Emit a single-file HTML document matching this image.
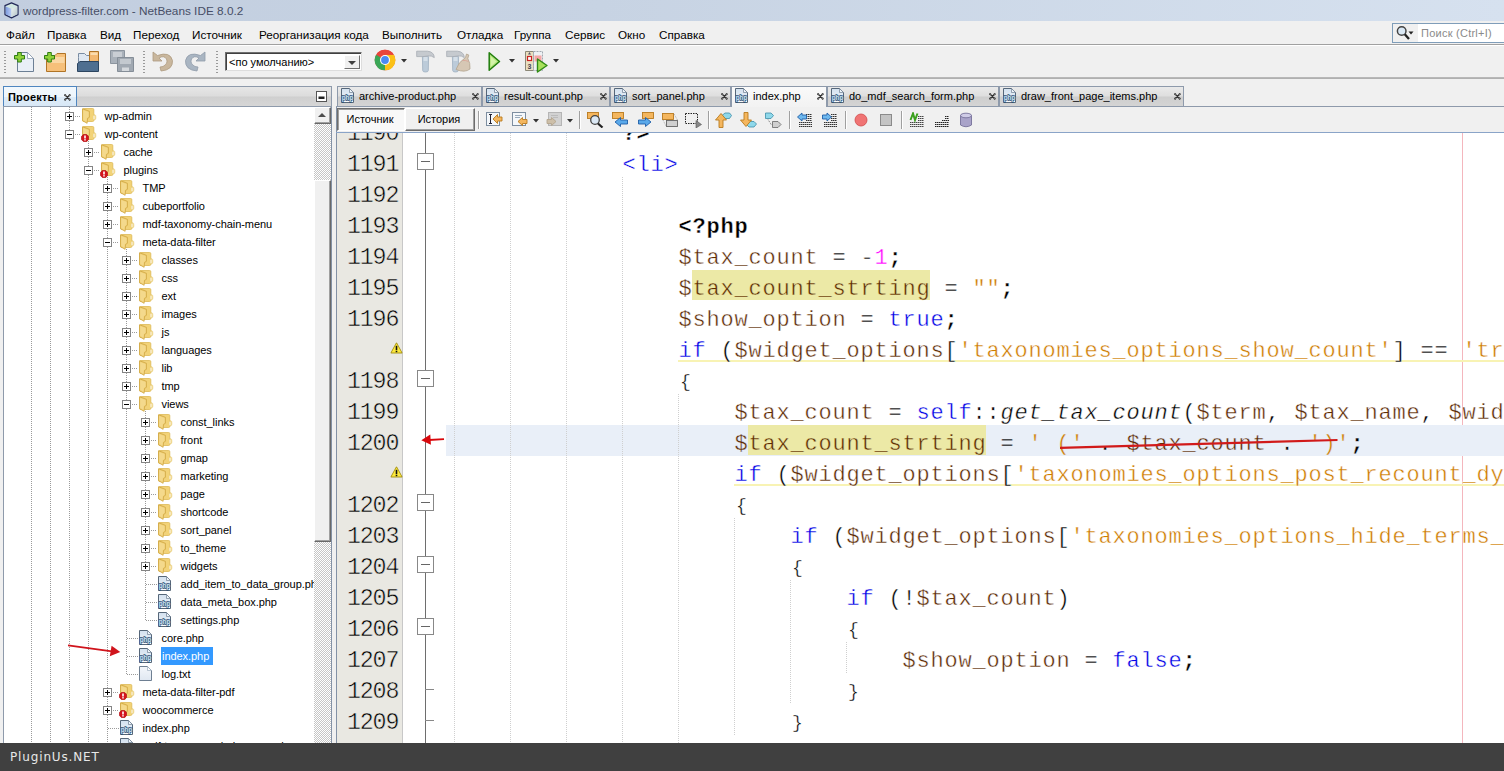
<!DOCTYPE html>
<html><head><meta charset="utf-8"><title>wordpress-filter.com - NetBeans IDE 8.0.2</title>
<style>
*{box-sizing:border-box;margin:0;padding:0}
html,body{width:1504px;height:771px;overflow:hidden}
body{position:relative;background:#f0f0f0;font-family:"Liberation Sans","DejaVu Sans",sans-serif;font-size:11px;color:#000}
i{display:block;position:absolute;font-style:normal}
.abs{position:absolute}
/* title */
.title{position:absolute;left:0;top:0;width:1504px;height:21px;background:linear-gradient(90deg,#c2cedf 0%,#c7d3e3 40%,#d6e1ef 100%)}
.title span{position:absolute;left:23px;top:4px;font-size:11.8px;line-height:15px;color:#474e66;white-space:nowrap}
/* menubar */
.menubar{position:absolute;left:0;top:21px;width:1504px;height:24px;background:#f0f0f0;border-bottom:1px solid #a0a0a0}
.menubar span{position:absolute;top:5.5px;font-size:11.7px;line-height:15px;white-space:nowrap;color:#000}
.search{position:absolute;left:1392px;top:23px;width:113px;height:20px;background:linear-gradient(90deg,#f0f0f0 0 25px,#fff 25px);border:1px solid #7f9db9}
.search span{position:absolute;left:28px;top:2px;font-size:11px;line-height:14px;color:#8a8a8a;white-space:nowrap;letter-spacing:0.25px}
/* toolbar */
.toolbar{position:absolute;left:0;top:45px;width:1504px;height:33px;background:#f0f0f0;border-top:1px solid #fff;border-bottom:1px solid #b8b8b8;box-shadow:0 1px 0 #b0b0b0}
.toolbar svg{position:absolute}
.grip{position:absolute;top:5px;width:2px;height:22px;background:repeating-linear-gradient(180deg,#9a9a9a 0 1px,transparent 1px 3px)}
.combo{position:absolute;left:225px;top:6px;width:137px;height:19px;background:#fff;border:1px solid #6f6f6f;border-right-color:#ddd;border-bottom-color:#ddd;box-shadow:inset 1px 1px 0 #404040}
.combo span{position:absolute;left:3px;top:2px;font-size:11px;line-height:14px;white-space:nowrap}
.combo b{position:absolute;right:1px;top:2px;width:16px;height:14px;background:#f0f0f0;border:1px solid #fff;border-right-color:#707070;border-bottom-color:#707070}
.combo b:after{content:"";position:absolute;left:3px;top:5px;border:4px solid transparent;border-top:4px solid #404040;border-bottom:0}
/* left panel */
.lhead{position:absolute;left:3px;top:86px;width:329px;height:21px;border:1px solid #8e9aab;background:linear-gradient(180deg,#e6e6e6 0%,#dcdcdc 48%,#cfcfcf 52%,#d6d6d6 100%)}
.ltab{position:absolute;left:-1px;top:-1px;width:74px;height:20px;background:linear-gradient(180deg,#f2f8fd 0%,#eef6fc 50%,#deecf8 55%,#d8e8f6 100%);border-right:1px solid #4f86c0;border-top:1px solid #4f86c0;border-left:1px solid #4f86c0}
.ltab span{position:absolute;left:4px;top:3px;font-weight:bold;font-size:11px;line-height:14px;letter-spacing:0.2px}
.tree{position:absolute;left:3px;top:107px;width:311px;height:636px;background:#fff;border-left:1px solid #8e9aab;overflow:hidden}
.tree .tin{position:absolute;left:-4px;top:0;width:330px;height:640px}
.tree .row{position:absolute;left:0;width:330px;height:18px}
.tree .row .t{position:absolute;top:2px;font-size:11px;line-height:14px;white-space:nowrap;padding:0 1px;letter-spacing:-0.05px;margin-left:-0.5px}
.tree .row .t.sel{background:#3399ff;color:#fff;top:0;line-height:18px;height:18px;margin-left:0;padding:0 1px;width:52px}
.tree .ex{position:absolute;top:5px}
.tree .ic{position:absolute;top:1px}
.tree .vl{width:1px;background:repeating-linear-gradient(180deg,#9a9a9a 0 1px,transparent 1px 2px)}
.tree .hl{top:9px;height:1px;background:repeating-linear-gradient(90deg,#9a9a9a 0 1px,transparent 1px 2px)}
.vscroll{position:absolute;left:314px;top:107px;width:18px;height:636px;border-right:1px solid #8391a5;background-color:#fff;background-image:repeating-conic-gradient(#fff 0 25%,#c6c6c6 0 50%);background-size:2px 2px}
.vscroll .up{position:absolute;left:0;top:0;width:17px;height:17px;background:#f0f0f0;border:1px solid #fff;border-right-color:#696969;border-bottom-color:#696969;box-shadow:inset -1px -1px 0 #a0a0a0}
.vscroll .up:after{content:"";position:absolute;left:3px;top:5px;border:4px solid transparent;border-bottom:4px solid #4c4c4c;border-top:0}
.vscroll .thumb{position:absolute;left:0;top:73px;width:17px;height:362px;background:#f0f0f0;border:1px solid #fff;border-right-color:#696969;border-bottom-color:#696969;box-shadow:inset -1px -1px 0 #a0a0a0}
.split{position:absolute;left:332px;top:86px;width:4px;height:657px;background:#f0f0f0}
/* editor */
.etabs{position:absolute;left:336px;top:86px;width:1168px;height:21px;border-bottom:1px solid #8e9aab;background:#f0f0f0}
.etab{position:absolute;top:0;height:20px;background:linear-gradient(180deg,#eaeaea 0%,#dedede 48%,#cecece 52%,#d4d4d4 100%);border:1px solid #8e9aab;border-bottom:0}
.etab.act{background:linear-gradient(180deg,#fafafa,#f2f2f2);height:21px}
.etab span{position:absolute;left:21px;top:2px;font-size:11px;line-height:14px;white-space:nowrap}
.etab svg{position:absolute}
.ebar{position:absolute;left:336px;top:107px;width:1168px;height:26px;background:#f0f0f0;border-bottom:1px solid #8aa4c8;box-shadow:inset 1px 0 0 #8391a5}
.ebar svg{position:absolute}
.ebtn{position:absolute;top:1px;height:23px;font-size:11px;line-height:21px;text-align:center;padding-right:2px;border:1px solid #fff;border-right-color:#6d6d6d;border-bottom-color:#6d6d6d;box-shadow:inset -1px -1px 0 #a0a0a0;background:#f0f0f0}
.ebtn.on{background:#f8f8f8;border-color:#6d6d6d #fff #fff #6d6d6d;box-shadow:inset 1px 1px 0 #a0a0a0}
.esep{position:absolute;top:4px;width:2px;height:18px;border-left:1px solid #a0a0a0;border-right:1px solid #fff}
.code{position:absolute;left:336px;top:133px;width:1168px;height:610px;background:#fff;overflow:hidden;font-family:"Liberation Mono","DejaVu Sans Mono",monospace;font-size:23.333px;color:#000}
.code .gutter{position:absolute;left:0;top:0;width:67px;height:610px;background:#e9e8e2;border-left:1px solid #8391a5;border-right:1px solid #c8c8c8}
.code .foldline{position:absolute;left:89px;top:0;width:1px;height:610px;background:#6e6e6e}
.code .margin{position:absolute;left:1126px;top:0;width:1px;height:610px;background:#f4b6bd}
.code .ig{z-index:2;width:1px;background:repeating-linear-gradient(180deg,#cfcfcf 0 1px,transparent 1px 2px)}
.ln{position:absolute;left:0;width:1168px;height:31px;line-height:31px;white-space:nowrap}
.ln.cur:before{content:"";position:absolute;left:110px;top:0;width:1060px;height:31px;background:#e9eff8}
.ln .num{position:absolute;left:11px;top:4px;letter-spacing:-1.2px;-webkit-text-stroke:0.5px #e9e8e2}
.ln .c{position:absolute;top:4.4px;font-size:22px;letter-spacing:0.8px;-webkit-text-stroke:0.4px #fff}
.ln.cur .c{-webkit-text-stroke-color:#e9eff8}
.ln .c .hi{-webkit-text-stroke-color:#ece9a6}
.ln .hib{top:0;height:30px;background:#ece9a6}
.ln .wav{top:28px;height:2px;width:900px;background:#f8f3b4}
.ln .warn{position:absolute;left:54px;top:10px}
.ln .fold{position:absolute;left:81px;top:7px}
.ln .fend{left:89px;top:16px;width:9px;height:1px;background:#888}
.br{font-size:18px;position:relative;top:-1px;left:1.500px;letter-spacing:0;-webkit-text-stroke-width:0.3px}
.b{font-weight:bold;color:#000;-webkit-text-stroke-width:0.35px}
.tag{color:#0000e6}
.v{color:#5c2a04}
.n{color:#ff00ff}
.s{color:#ce7b00}
.k{color:#0000e6}
.i{font-style:italic}
.bottom{position:absolute;left:0;top:743px;width:1504px;height:28px;background:#404040}
.bottom span{position:absolute;left:10px;top:7px;font-family:"DejaVu Sans","Liberation Sans",sans-serif;font-size:12px;line-height:15px;color:#e8e8e8;letter-spacing:0.85px}

</style></head>
<body>
<svg width="0" height="0" style="position:absolute">
<defs>
<linearGradient id="gFold" x1="0" y1="0" x2="1" y2="0"><stop offset="0" stop-color="#e9c35c"/><stop offset="0.5" stop-color="#f1d27c"/><stop offset="1" stop-color="#f3d373"/></linearGradient>
<linearGradient id="gPhp" x1="0" y1="0" x2="0" y2="1"><stop offset="0" stop-color="#d3e1ef"/><stop offset="0.5" stop-color="#e2ebf4"/><stop offset="0.9" stop-color="#f4f8fc"/><stop offset="1" stop-color="#ffffff"/></linearGradient>
<linearGradient id="gTxt" x1="0" y1="0" x2="0" y2="1"><stop offset="0" stop-color="#f4f7fb"/><stop offset="1" stop-color="#dfe7f1"/></linearGradient>
<g id="exp"><rect x="0.5" y="0.5" width="8" height="8" fill="#fff" stroke="#848484"/><path d="M2 4.5h5M4.5 2v5" stroke="#000" stroke-width="1"/></g>
<g id="exm"><rect x="0.5" y="0.5" width="8" height="8" fill="#fff" stroke="#848484"/><path d="M2 4.5h5" stroke="#000" stroke-width="1"/></g>
<g id="i-folder">
 <rect x="0.6" y="0.5" width="11.2" height="13" rx="1.2" fill="url(#gFold)" stroke="#ddb955" stroke-width="0.8"/>
 <path d="M11.8 6.300 L13.700 7.400 Q14.100 9.300 13.700 11.200 L11.800 12.300 Z" fill="#f6dd94" stroke="#e3c46a" stroke-width="0.500"/>
 <path d="M11.500 7.600 L12.400 8 V11 L11.500 11.600 Z" fill="#fff"/>
 <path d="M0.500 0.800 L7.400 3.300 V9.300 L5.500 10.500 L5.100 15.300 L0.400 12.600 Z" fill="#f0d078" stroke="#cfa641" stroke-width="0.800" stroke-linejoin="round"/>
 <path d="M1.300 2.200 L6.600 4.100 V8.800 L4.800 10 L4.500 13.800 L1.300 12 Z" fill="#f7e09a" opacity="0.600"/>
</g>
<g id="i-php">
 <path d="M0.500 0.500 H8.500 L12.500 4.500 V14.500 H0.500 Z" fill="url(#gPhp)" stroke="#566779"/>
 <path d="M8.500 0.500 V4.500 H12.500 Z" fill="#eef4fa" stroke="#6f8092" stroke-width="0.700"/>
 <text x="6.500" y="12" font-family="Liberation Sans,sans-serif" font-size="7.800" font-weight="bold" text-anchor="middle" fill="#d8ebfc" stroke="#27496f" stroke-width="1.300" paint-order="stroke" textLength="11.500" lengthAdjust="spacingAndGlyphs">php</text>
</g>
<g id="i-txt">
 <path d="M0.5 0.5 H8.5 L12.5 4.5 V14.5 H0.5 Z" fill="url(#gTxt)" stroke="#6e7f92"/>
 <path d="M8.5 0.5 V4.5 H12.5 Z" fill="#fff" stroke="#8fa2b6" stroke-width="0.6"/>
</g>
<g id="i-err"><path d="M2.600 0.300 H5.400 L7.700 2.600 V5.400 L5.400 7.700 H2.600 L0.300 5.400 V2.600 Z" fill="#d4141c" stroke="#a80e14" stroke-width="0.600"/><rect x="3.200" y="1.500" width="1.600" height="3" fill="#fff"/><rect x="3.200" y="5.200" width="1.600" height="1.300" fill="#fff"/></g>
<g id="i-warn"><path d="M6.500 1.400 L11.700 10.800 H1.300 Z" fill="#fde93c" stroke="#a8941a" stroke-width="1.500" stroke-linejoin="round"/><path d="M6.500 1.600 L11.400 10.600 H1.600 Z" fill="#fde93c"/><rect x="5.700" y="3.800" width="1.600" height="4.200" fill="#111"/><rect x="5.700" y="8.700" width="1.600" height="1.500" fill="#111"/></g>
<g id="i-fold"><rect x="0.5" y="0.5" width="16" height="16" fill="#fff" stroke="#888"/><path d="M4 8.5h9" stroke="#666" stroke-width="1"/></g>
<g id="i-x" transform="scale(0.85)"><path d="M1.2 1.2 L6.800 6.800 M6.800 1.200 L1.200 6.800" stroke="#333" stroke-width="1.500" fill="none" stroke-linecap="round"/><circle cx="1.400" cy="1.400" r="1.200" fill="#333"/><circle cx="6.600" cy="1.400" r="1.200" fill="#333"/><circle cx="1.400" cy="6.600" r="1.200" fill="#333"/><circle cx="6.600" cy="6.600" r="1.200" fill="#333"/><circle cx="1.400" cy="1.400" r="0.450" fill="#eee"/><circle cx="6.600" cy="1.400" r="0.450" fill="#eee"/><circle cx="1.400" cy="6.600" r="0.450" fill="#eee"/><circle cx="6.600" cy="6.600" r="0.450" fill="#eee"/></g>
<g id="i-dd"><path d="M0 0 H6 L3 3.5 Z" fill="#333"/></g>
</defs>
</svg>
<div class="title">
<svg class="abs" style="left:4px;top:2px" width="15" height="17" viewBox="0 0 15 17"><defs><linearGradient id="cbL" x1="0" y1="0" x2="1" y2="0"><stop offset="0" stop-color="#7d9be0"/><stop offset="1" stop-color="#bccdf4"/></linearGradient><linearGradient id="cbR" x1="0" y1="0" x2="1" y2="1"><stop offset="0" stop-color="#eef3f3"/><stop offset="1" stop-color="#b4c4c8"/></linearGradient></defs><path d="M7.500 0.800 L14 3.600 V12.600 L7.500 15.800 L1 12.600 V3.600 Z" fill="#d3e8e2" stroke="#252b5a" stroke-width="1.300" stroke-linejoin="round"/><path d="M1.700 4.400 L7.500 6.800 V15 L1.700 12.200 Z" fill="url(#cbL)"/><path d="M7.500 6.800 L13.300 4.400 V12.200 L7.500 15 Z" fill="url(#cbR)"/></svg>
<span>wordpress-filter.com - NetBeans IDE 8.0.2</span>
</div>
<div class="menubar">
<span style="left:6px">Файл</span><span style="left:47px">Правка</span><span style="left:100px">Вид</span><span style="left:133px">Переход</span><span style="left:192px">Источник</span><span style="left:259px">Реорганизация кода</span><span style="left:382px">Выполнить</span><span style="left:457px">Отладка</span><span style="left:514px">Группа</span><span style="left:565px">Сервис</span><span style="left:618px">Окно</span><span style="left:659px">Справка</span>
</div>
<div class="search">
<svg class="abs" style="left:3px;top:1px" width="20" height="16" viewBox="0 0 20 16"><circle cx="5.700" cy="6" r="4.300" fill="#dbe9f5" stroke="#444" stroke-width="1.500"/><path d="M8.800 9.300 L13 14" stroke="#222" stroke-width="2.300"/><path d="M12.500 6.500 H17.500 L15 9.500 Z" fill="#222"/></svg>
<span>Поиск (Ctrl+I)</span>
</div>
<div class="toolbar">
<i class="grip" style="left:4px"></i>
<!-- new file -->
<svg style="left:12px;top:3px" width="24" height="24" viewBox="0 0 24 24"><path d="M5.500 3.500 H15.500 L21.500 9.500 V22.500 H5.500 Z" fill="#e9eff7" stroke="#6c7f95"/><path d="M15.500 3.500 V9.500 H21.500 Z" fill="#fff" stroke="#8a9bb0" stroke-width="0.800"/><path d="M5.700 3.500 H9.300 V6.500 H12.500 V10 H9.300 V13 H5.700 V10 H2.500 V6.500 H5.700 Z" fill="#8fd23a" stroke="#2f7d12" stroke-width="1"/></svg>
<!-- new project -->
<svg style="left:42px;top:3px" width="24" height="24" viewBox="0 0 24 24"><path d="M4.500 6.500 H13 L15 4.500 H23.500 V22.500 H4.500 Z" fill="#f6c07a" stroke="#b07426"/><path d="M5.500 8 H22.500 V14 H5.500 Z" fill="#fbdcae" opacity="0.800"/><path d="M5.700 3.500 H9.300 V6.500 H12.500 V10 H9.300 V13 H5.700 V10 H2.500 V6.500 H5.700 Z" fill="#8fd23a" stroke="#2f7d12" stroke-width="1"/></svg>
<!-- open project -->
<svg style="left:76px;top:3px" width="26" height="24" viewBox="0 0 26 24"><path d="M2.5 8.5 V4.5 H8.5 L10.5 6.5 H14.5 V14 H2.5 Z" fill="#dfe8f2" stroke="#7a8da3"/><path d="M13.5 2.5 H22.5 V13.5 H13.5 Z" fill="#f3b871" stroke="#b07426"/><path d="M14.5 3.5 H21.5 V6 H14.5 Z" fill="#fbdcae"/><path d="M1.5 14.5 L4 12.5 H22.5 V22.5 H1.5 Z" fill="#4f6f90" stroke="#2c4560"/></svg>
<!-- save all (disabled) -->
<svg style="left:109px;top:3px" width="26" height="24" viewBox="0 0 26 24"><path d="M1.5 1.5 H15.5 V14.5 H1.5 Z" fill="#a9b1ba" stroke="#8b949e"/><path d="M4 3 H13 V8 H4 Z" fill="#c9ced4"/><path d="M8.5 8.5 H24.5 V22.5 H8.5 Z" fill="#a1a9b2" stroke="#858e98"/><path d="M11 10 H22 V15 H11 Z" fill="#c3c9cf"/><path d="M13 18.5 H20 V22 H13 Z" fill="#d5d9dd"/></svg>
<i class="grip" style="left:143px"></i>
<!-- undo -->
<svg style="left:151px;top:4px" width="24" height="22" viewBox="0 0 24 22"><path d="M2 2 L2 11 L11 11 L8 8 Q13 5 15.5 9 Q17.5 13.5 12 16.5 L9 17 L10 21 Q22 20 21.5 10.5 Q19 1 6.5 5.5 Z" fill="#c9b79d" stroke="#ad9a80" stroke-width="0.8"/></svg>
<!-- redo -->
<svg style="left:183px;top:4px" width="24" height="22" viewBox="0 0 24 22"><path d="M22 2 L22 11 L13 11 L16 8 Q11 5 8.5 9 Q6.500 13.5 12 16.500 L15 17 L14 21 Q2 20 2.500 10.500 Q5 1 17.500 5.500 Z" fill="#a9b5c2" stroke="#909ca9" stroke-width="0.8"/></svg>
<i class="grip" style="left:216px"></i>
<div class="combo"><span>&lt;по умолчанию&gt;</span><b></b></div>
<!-- chrome -->
<svg style="left:374px;top:3px" width="22" height="22" viewBox="0 0 22 22"><circle cx="11" cy="11" r="10.3" fill="#e8453c"/><path d="M11 11 L2.1 5.8 A10.3 10.3 0 0 0 11 21.300 L15.500 13.600 Z" fill="#3aa757"/><path d="M11 11 L11 21.300 A10.300 10.300 0 0 0 19.900 5.800 L11 5.800 Z" fill="#fbc116"/><path d="M2.100 5.800 A10.300 10.300 0 0 1 19.900 5.800 L11 5.800 Z" fill="#e8453c"/><circle cx="11" cy="11" r="5" fill="#fff"/><circle cx="11" cy="11" r="3.900" fill="#4a8af4"/></svg>
<svg style="left:401px;top:13px" width="6" height="4"><use href="#i-dd"/></svg>
<!-- hammer -->
<svg style="left:414px;top:3px" width="22" height="24" viewBox="0 0 22 24"><path d="M8.400 7.600 H14.600 L14.300 21.500 Q14.300 23 11.500 23 Q8.700 23 8.700 21.500 Z" fill="#bccbd9" stroke="#9fb0c0" stroke-width="0.800"/><path d="M9.500 8 H13.500 V12 H9.500 Z" fill="#d5dfe8"/><path d="M2.700 2.200 H13.500 Q20 2.800 20.300 8.600 Q17.500 6.500 14.500 6.900 L9 7.600 H2.700 Z" fill="#c6cacf" stroke="#a6abb2" stroke-width="0.800" stroke-linejoin="round"/></svg>
<!-- clean & build -->
<svg style="left:444px;top:3px" width="28" height="24" viewBox="0 0 28 24"><path d="M8.400 7.600 H14.600 L14.300 21.500 Q14.300 23 11.500 23 Q8.700 23 8.700 21.500 Z" fill="#bccbd9" stroke="#9fb0c0" stroke-width="0.800"/><path d="M9.500 8 H13.500 V12 H9.500 Z" fill="#d5dfe8"/><path d="M2.700 2.200 H13.500 Q20 2.800 20.300 8.600 Q17.500 6.500 14.500 6.900 L9 7.600 H2.700 Z" fill="#c6cacf" stroke="#a6abb2" stroke-width="0.800" stroke-linejoin="round"/><path d="M22.500 5 L24.800 6 L23.800 9.500 Q26.500 14 26 20 Q21 24 12 20.500 Q14 13.500 21.500 8.500 Z" fill="#d6c7b4" stroke="#b3a48f" stroke-width="0.800" stroke-linejoin="round"/><path d="M18.500 11.500 Q21.500 11 24.500 12.500" fill="none" stroke="#d9a69a" stroke-width="0.900"/></svg>
<!-- run -->
<svg style="left:486px;top:4px" width="16" height="22" viewBox="0 0 16 22"><path d="M3.200 2.800 L13.500 11.500 L3.200 20.300 Z" fill="#b2e57a" stroke="#1f7d0c" stroke-width="1.500" stroke-linejoin="round"/><path d="M4.800 6.500 L10.500 11.500 L4.800 16.500 Z" fill="#d3f3a8"/></svg>
<svg style="left:509px;top:13px" width="6" height="4"><use href="#i-dd"/></svg>
<!-- debug -->
<svg style="left:523px;top:3px" width="26" height="24" viewBox="0 0 26 24"><path d="M2.500 2.500 H10.500 V21.500 H2.500 Z" fill="#eadfc0" stroke="#8c8877"/><rect x="4.500" y="7.500" width="4" height="4" fill="#fff" stroke="#c22" stroke-width="1.200"/><path d="M6.500 3 L8 5.500 H5 Z" fill="#556"/><text x="6.500" y="19.500" font-size="7" font-weight="bold" text-anchor="middle" fill="#445" font-family="Liberation Sans,sans-serif">3</text><path d="M10.500 2.500 H19.500 V21.500 H10.500 Z" fill="#eef1f4" stroke="#a0a8b0" stroke-dasharray="2 1"/><rect x="11.500" y="6.500" width="7" height="6" fill="#f4a6a6"/><path d="M14.500 10 L24 16.500 L14.500 23 Z" fill="#a8e05a" stroke="#2f8a14" stroke-width="1.400" stroke-linejoin="round"/></svg>
<svg style="left:553px;top:13px" width="6" height="4"><use href="#i-dd"/></svg>
</div>
<div class="lhead"><div class="ltab"><span>Проекты</span><svg class="abs" style="left:60px;top:7px" width="8" height="8"><use href="#i-x"/></svg></div>
<svg class="abs" style="left:312px;top:4px" width="11" height="11"><rect x="0.5" y="0.5" width="10" height="10" fill="#fff" stroke="#555"/><rect x="2.500" y="5.500" width="6" height="2.500" fill="#222"/></svg>
</div>
<div class="tree"><div class="tin">
<i class="vl" style="left:31px;top:0;height:640px"></i><i class="vl" style="left:50px;top:0;height:640px"></i><i class="vl" style="left:69px;top:0px;height:640px"></i><i class="vl" style="left:88px;top:32px;height:608px"></i><i class="vl" style="left:107px;top:68px;height:572px"></i><i class="vl" style="left:126px;top:140px;height:427px"></i><i class="vl" style="left:145px;top:302px;height:211px"></i>
<div class="row" style="top:0px"><svg class="ex" style="left:65px" width="9" height="9"><use href="#exp"/></svg><i class="hl" style="left:75px;width:6px"></i><svg class="ic" style="left:82px" width="16" height="16"><use href="#i-folder"/></svg><span class="t" style="left:104px">wp-admin</span></div>
<div class="row" style="top:18px"><svg class="ex" style="left:65px" width="9" height="9"><use href="#exm"/></svg><i class="hl" style="left:75px;width:6px"></i><svg class="ic" style="left:82px" width="16" height="16"><use href="#i-folder"/></svg><svg class="ic" style="left:81px;top:9px" width="8" height="8"><use href="#i-err"/></svg><span class="t" style="left:104px">wp-content</span></div>
<div class="row" style="top:36px"><svg class="ex" style="left:84px" width="9" height="9"><use href="#exp"/></svg><i class="hl" style="left:94px;width:6px"></i><svg class="ic" style="left:101px" width="16" height="16"><use href="#i-folder"/></svg><span class="t" style="left:123px">cache</span></div>
<div class="row" style="top:54px"><svg class="ex" style="left:84px" width="9" height="9"><use href="#exm"/></svg><i class="hl" style="left:94px;width:6px"></i><svg class="ic" style="left:101px" width="16" height="16"><use href="#i-folder"/></svg><svg class="ic" style="left:100px;top:9px" width="8" height="8"><use href="#i-err"/></svg><span class="t" style="left:123px">plugins</span></div>
<div class="row" style="top:72px"><svg class="ex" style="left:103px" width="9" height="9"><use href="#exp"/></svg><i class="hl" style="left:113px;width:6px"></i><svg class="ic" style="left:120px" width="16" height="16"><use href="#i-folder"/></svg><span class="t" style="left:142px">TMP</span></div>
<div class="row" style="top:90px"><svg class="ex" style="left:103px" width="9" height="9"><use href="#exp"/></svg><i class="hl" style="left:113px;width:6px"></i><svg class="ic" style="left:120px" width="16" height="16"><use href="#i-folder"/></svg><span class="t" style="left:142px">cubeportfolio</span></div>
<div class="row" style="top:108px"><svg class="ex" style="left:103px" width="9" height="9"><use href="#exp"/></svg><i class="hl" style="left:113px;width:6px"></i><svg class="ic" style="left:120px" width="16" height="16"><use href="#i-folder"/></svg><span class="t" style="left:142px">mdf-taxonomy-chain-menu</span></div>
<div class="row" style="top:126px"><svg class="ex" style="left:103px" width="9" height="9"><use href="#exm"/></svg><i class="hl" style="left:113px;width:6px"></i><svg class="ic" style="left:120px" width="16" height="16"><use href="#i-folder"/></svg><span class="t" style="left:142px">meta-data-filter</span></div>
<div class="row" style="top:144px"><svg class="ex" style="left:122px" width="9" height="9"><use href="#exp"/></svg><i class="hl" style="left:132px;width:6px"></i><svg class="ic" style="left:139px" width="16" height="16"><use href="#i-folder"/></svg><span class="t" style="left:161px">classes</span></div>
<div class="row" style="top:162px"><svg class="ex" style="left:122px" width="9" height="9"><use href="#exp"/></svg><i class="hl" style="left:132px;width:6px"></i><svg class="ic" style="left:139px" width="16" height="16"><use href="#i-folder"/></svg><span class="t" style="left:161px">css</span></div>
<div class="row" style="top:180px"><svg class="ex" style="left:122px" width="9" height="9"><use href="#exp"/></svg><i class="hl" style="left:132px;width:6px"></i><svg class="ic" style="left:139px" width="16" height="16"><use href="#i-folder"/></svg><span class="t" style="left:161px">ext</span></div>
<div class="row" style="top:198px"><svg class="ex" style="left:122px" width="9" height="9"><use href="#exp"/></svg><i class="hl" style="left:132px;width:6px"></i><svg class="ic" style="left:139px" width="16" height="16"><use href="#i-folder"/></svg><span class="t" style="left:161px">images</span></div>
<div class="row" style="top:216px"><svg class="ex" style="left:122px" width="9" height="9"><use href="#exp"/></svg><i class="hl" style="left:132px;width:6px"></i><svg class="ic" style="left:139px" width="16" height="16"><use href="#i-folder"/></svg><span class="t" style="left:161px">js</span></div>
<div class="row" style="top:234px"><svg class="ex" style="left:122px" width="9" height="9"><use href="#exp"/></svg><i class="hl" style="left:132px;width:6px"></i><svg class="ic" style="left:139px" width="16" height="16"><use href="#i-folder"/></svg><span class="t" style="left:161px">languages</span></div>
<div class="row" style="top:252px"><svg class="ex" style="left:122px" width="9" height="9"><use href="#exp"/></svg><i class="hl" style="left:132px;width:6px"></i><svg class="ic" style="left:139px" width="16" height="16"><use href="#i-folder"/></svg><span class="t" style="left:161px">lib</span></div>
<div class="row" style="top:270px"><svg class="ex" style="left:122px" width="9" height="9"><use href="#exp"/></svg><i class="hl" style="left:132px;width:6px"></i><svg class="ic" style="left:139px" width="16" height="16"><use href="#i-folder"/></svg><span class="t" style="left:161px">tmp</span></div>
<div class="row" style="top:288px"><svg class="ex" style="left:122px" width="9" height="9"><use href="#exm"/></svg><i class="hl" style="left:132px;width:6px"></i><svg class="ic" style="left:139px" width="16" height="16"><use href="#i-folder"/></svg><span class="t" style="left:161px">views</span></div>
<div class="row" style="top:306px"><svg class="ex" style="left:141px" width="9" height="9"><use href="#exp"/></svg><i class="hl" style="left:151px;width:6px"></i><svg class="ic" style="left:158px" width="16" height="16"><use href="#i-folder"/></svg><span class="t" style="left:180px">const_links</span></div>
<div class="row" style="top:324px"><svg class="ex" style="left:141px" width="9" height="9"><use href="#exp"/></svg><i class="hl" style="left:151px;width:6px"></i><svg class="ic" style="left:158px" width="16" height="16"><use href="#i-folder"/></svg><span class="t" style="left:180px">front</span></div>
<div class="row" style="top:342px"><svg class="ex" style="left:141px" width="9" height="9"><use href="#exp"/></svg><i class="hl" style="left:151px;width:6px"></i><svg class="ic" style="left:158px" width="16" height="16"><use href="#i-folder"/></svg><span class="t" style="left:180px">gmap</span></div>
<div class="row" style="top:360px"><svg class="ex" style="left:141px" width="9" height="9"><use href="#exp"/></svg><i class="hl" style="left:151px;width:6px"></i><svg class="ic" style="left:158px" width="16" height="16"><use href="#i-folder"/></svg><span class="t" style="left:180px">marketing</span></div>
<div class="row" style="top:378px"><svg class="ex" style="left:141px" width="9" height="9"><use href="#exp"/></svg><i class="hl" style="left:151px;width:6px"></i><svg class="ic" style="left:158px" width="16" height="16"><use href="#i-folder"/></svg><span class="t" style="left:180px">page</span></div>
<div class="row" style="top:396px"><svg class="ex" style="left:141px" width="9" height="9"><use href="#exp"/></svg><i class="hl" style="left:151px;width:6px"></i><svg class="ic" style="left:158px" width="16" height="16"><use href="#i-folder"/></svg><span class="t" style="left:180px">shortcode</span></div>
<div class="row" style="top:414px"><svg class="ex" style="left:141px" width="9" height="9"><use href="#exp"/></svg><i class="hl" style="left:151px;width:6px"></i><svg class="ic" style="left:158px" width="16" height="16"><use href="#i-folder"/></svg><span class="t" style="left:180px">sort_panel</span></div>
<div class="row" style="top:432px"><svg class="ex" style="left:141px" width="9" height="9"><use href="#exp"/></svg><i class="hl" style="left:151px;width:6px"></i><svg class="ic" style="left:158px" width="16" height="16"><use href="#i-folder"/></svg><span class="t" style="left:180px">to_theme</span></div>
<div class="row" style="top:450px"><svg class="ex" style="left:141px" width="9" height="9"><use href="#exp"/></svg><i class="hl" style="left:151px;width:6px"></i><svg class="ic" style="left:158px" width="16" height="16"><use href="#i-folder"/></svg><span class="t" style="left:180px">widgets</span></div>
<div class="row" style="top:468px"><i class="hl" style="left:146px;width:11px"></i><svg class="ic" style="left:158px" width="16" height="16"><use href="#i-php"/></svg><span class="t" style="left:180px">add_item_to_data_group.php</span></div>
<div class="row" style="top:486px"><i class="hl" style="left:146px;width:11px"></i><svg class="ic" style="left:158px" width="16" height="16"><use href="#i-php"/></svg><span class="t" style="left:180px">data_meta_box.php</span></div>
<div class="row" style="top:504px"><i class="hl" style="left:146px;width:11px"></i><svg class="ic" style="left:158px" width="16" height="16"><use href="#i-php"/></svg><span class="t" style="left:180px">settings.php</span></div>
<div class="row" style="top:522px"><i class="hl" style="left:127px;width:11px"></i><svg class="ic" style="left:139px" width="16" height="16"><use href="#i-php"/></svg><span class="t" style="left:161px">core.php</span></div>
<div class="row" style="top:540px"><i class="hl" style="left:127px;width:11px"></i><svg class="ic" style="left:139px" width="16" height="16"><use href="#i-php"/></svg><span class="t sel" style="left:161px">index.php</span></div>
<div class="row" style="top:558px"><i class="hl" style="left:127px;width:11px"></i><svg class="ic" style="left:139px" width="16" height="16"><use href="#i-txt"/></svg><span class="t" style="left:161px">log.txt</span></div>
<div class="row" style="top:576px"><svg class="ex" style="left:103px" width="9" height="9"><use href="#exp"/></svg><i class="hl" style="left:113px;width:6px"></i><svg class="ic" style="left:120px" width="16" height="16"><use href="#i-folder"/></svg><svg class="ic" style="left:119px;top:9px" width="8" height="8"><use href="#i-err"/></svg><span class="t" style="left:142px">meta-data-filter-pdf</span></div>
<div class="row" style="top:594px"><svg class="ex" style="left:103px" width="9" height="9"><use href="#exp"/></svg><i class="hl" style="left:113px;width:6px"></i><svg class="ic" style="left:120px" width="16" height="16"><use href="#i-folder"/></svg><svg class="ic" style="left:119px;top:9px" width="8" height="8"><use href="#i-err"/></svg><span class="t" style="left:142px">woocommerce</span></div>
<div class="row" style="top:612px"><i class="hl" style="left:108px;width:11px"></i><svg class="ic" style="left:120px" width="16" height="16"><use href="#i-php"/></svg><span class="t" style="left:142px">index.php</span></div>
<div class="row" style="top:630px"><i class="hl" style="left:108px;width:11px"></i><svg class="ic" style="left:120px" width="16" height="16"><use href="#i-php"/></svg><span class="t" style="left:142px">mdf-taxonomy-chain-menu.php</span></div>
</div></div>
<div class="vscroll"><div class="up"></div><div class="thumb"></div></div>
<div class="split"></div>
<svg class="abs" style="left:64px;top:640px" width="60" height="24" viewBox="0 0 60 24"><path d="M4 5.400 L48 11.400" stroke="#d0141c" stroke-width="1.800" fill="none"/><path d="M56.300 11.900 L47.600 5.800 L45.800 16.200 Z" fill="#d0141c"/></svg>
<div class="etabs">
<div class="etab" style="left:1px;width:145px"><svg style="left:3px;top:1px" width="14" height="16"><use href="#i-php"/></svg><span>archive-product.php</span><svg style="right:1px;top:6px" width="8" height="8"><use href="#i-x"/></svg></div>
<div class="etab" style="left:146px;width:128px"><svg style="left:3px;top:1px" width="14" height="16"><use href="#i-php"/></svg><span>result-count.php</span><svg style="right:1px;top:6px" width="8" height="8"><use href="#i-x"/></svg></div>
<div class="etab" style="left:274px;width:121px"><svg style="left:3px;top:1px" width="14" height="16"><use href="#i-php"/></svg><span>sort_panel.php</span><svg style="right:1px;top:6px" width="8" height="8"><use href="#i-x"/></svg></div>
<div class="etab act" style="left:395px;width:96px"><svg style="left:3px;top:1px" width="14" height="16"><use href="#i-php"/></svg><span>index.php</span><svg style="right:1px;top:6px" width="8" height="8"><use href="#i-x"/></svg></div>
<div class="etab" style="left:491px;width:172px"><svg style="left:3px;top:1px" width="14" height="16"><use href="#i-php"/></svg><span>do_mdf_search_form.php</span><svg style="right:1px;top:6px" width="8" height="8"><use href="#i-x"/></svg></div>
<div class="etab" style="left:663px;width:185px"><svg style="left:3px;top:1px" width="14" height="16"><use href="#i-php"/></svg><span>draw_front_page_items.php</span><svg style="right:1px;top:6px" width="8" height="8"><use href="#i-x"/></svg></div>
</div>
<div class="ebar">
<div class="ebtn on" style="left:1px;width:68px">Источник</div><div class="ebtn" style="left:69px;width:70px">История</div>
<i class="esep" style="left:142px"></i><svg style="left:150px;top:4px" width="17" height="16" viewBox="0 0 17 16"><rect x="0.500" y="1.500" width="13" height="13" fill="#f4f7fa" stroke="#7d8ea0"/><path d="M3 3.500h3M4.500 3.500v9M3 12.500h3" stroke="#223" stroke-width="1" fill="none"/><path d="M7 8 L11.500 3.500 V6 H16 V10 H11.500 V12.500 Z" fill="#f4b65e" stroke="#b97a1e" stroke-width="0.9"/></svg>
<svg style="left:176px;top:4px" width="17" height="16" viewBox="0 0 17 16"><rect x="0.500" y="1.500" width="13" height="13" fill="#f4f7fa" stroke="#7d8ea0"/><path d="M3 4.500h7M3 6.500h5" stroke="#9ab" stroke-width="1"/><path d="M6 10.500 L10.500 6.500 V8.500 H15 V12.500 H10.500 V14.500 Z" fill="#f4b65e" stroke="#b97a1e" stroke-width="0.9"/></svg>
<svg style="left:197px;top:12px" width="6" height="4"><use href="#i-dd"/></svg><svg style="left:210px;top:4px" width="17" height="16" viewBox="0 0 17 16"><rect x="2.500" y="1.500" width="13" height="13" fill="#d2d2d2" stroke="#b5b5b5"/><path d="M5 4.500h7M7 6.500h5" stroke="#bbb" stroke-width="1"/><path d="M10 10.500 L5.500 6.500 V8.500 H1 V12.500 H5.500 V14.500 Z" fill="#cdbfa9" stroke="#b3a58f" stroke-width="0.9"/></svg>
<svg style="left:231px;top:12px" width="6" height="4"><use href="#i-dd"/></svg><i class="esep" style="left:243px"></i><svg style="left:251px;top:5px" width="17" height="16" viewBox="0 0 17 16"><rect x="0.500" y="0.500" width="11" height="6" fill="#f4b65e" stroke="#b97a1e" stroke-width="0.9"/><circle cx="8" cy="8" r="4.300" fill="#dbe8f4" stroke="#444" stroke-width="1.300"/><path d="M11 11.500 L15.500 15.500" stroke="#222" stroke-width="2.200"/></svg>
<svg style="left:276px;top:5px" width="17" height="16" viewBox="0 0 17 16"><rect x="0.500" y="0.500" width="11" height="6" fill="#f4b65e" stroke="#b97a1e" stroke-width="0.9"/><path d="M3 10 L8.500 5.500 V8 H15.500 V12 H8.500 V14.500 Z" fill="#5aa9ea" stroke="#1f5fa8" stroke-width="0.9"/></svg>
<svg style="left:301px;top:5px" width="17" height="16" viewBox="0 0 17 16"><rect x="5.500" y="0.500" width="11" height="6" fill="#f4b65e" stroke="#b97a1e" stroke-width="0.9"/><path d="M14 10 L8.500 5.500 V8 H1.500 V12 H8.500 V14.500 Z" fill="#5aa9ea" stroke="#1f5fa8" stroke-width="0.9"/></svg>
<svg style="left:326px;top:5px" width="17" height="16" viewBox="0 0 17 16"><rect x="0.500" y="1.500" width="11" height="6" fill="#f4b65e" stroke="#b97a1e" stroke-width="0.9"/><rect x="4.500" y="8.500" width="11" height="6" fill="#d0d0d0" stroke="#666" stroke-width="0.900"/><path d="M12 2 L15.500 8 M1 8 L4 14" stroke="#888" stroke-width="0.700" stroke-dasharray="1 1"/></svg>
<svg style="left:349px;top:5px" width="17" height="16" viewBox="0 0 17 16"><rect x="0.500" y="1.500" width="12" height="10" fill="none" stroke="#222" stroke-width="1" stroke-dasharray="1.500 1"/><path d="M11 8.500 L16.500 12.500 L11 16 Z" fill="#888" stroke="#555" stroke-width="0.600"/></svg>
<i class="esep" style="left:372px"></i><svg style="left:379px;top:5px" width="17" height="16" viewBox="0 0 17 16"><path d="M7 3.500 L10 1 H14.500 L16.500 3.500 L14.500 6.500 H10 Z" fill="#8fd8ea" stroke="#3d8ea8" stroke-width="0.800"/><path d="M6 1.500 L11.500 8 H8 V15.500 H4 V8 H0.500 Z" fill="#f4b65e" stroke="#b97a1e" stroke-width="0.9"/></svg>
<svg style="left:404px;top:5px" width="17" height="16" viewBox="0 0 17 16"><path d="M6 12 L9 9.500 H14 L16.500 12 L14 15 H9 Z" fill="#8fd8ea" stroke="#3d8ea8" stroke-width="0.800"/><path d="M6 14.500 L11.500 8 H8 V0.500 H4 V8 H0.500 Z" fill="#f4b65e" stroke="#b97a1e" stroke-width="0.9"/></svg>
<svg style="left:429px;top:5px" width="17" height="16" viewBox="0 0 17 16"><path d="M0.500 1 H6 L8.500 3.500 L6 6.500 H0.500 Z" fill="#8fd8ea" stroke="#3d8ea8" stroke-width="0.800"/><path d="M7.500 9.500 H13 L16 12.500 L13 15.500 H7.500 Z" fill="#d0d0d0" stroke="#666" stroke-width="0.800"/><path d="M3 7.500 L6.500 13" stroke="#555" stroke-width="0.800" stroke-dasharray="1 1"/></svg>
<i class="esep" style="left:453px"></i><svg style="left:461px;top:5px" width="17" height="16" viewBox="0 0 17 16"><path d="M9 2.500h6M9 4.500h6M9 6.500h6M9 8.500h6M2 10.500h13M2 12.500h13M2 14.500h13" stroke="#333" stroke-width="1" stroke-dasharray="1.500 0.500"/><path d="M0.500 5 L5 1 V3 H9.500 V7 H5 V9 Z" fill="#6db8ee" stroke="#1f5fa8" stroke-width="0.900"/></svg>
<svg style="left:486px;top:5px" width="17" height="16" viewBox="0 0 17 16"><path d="M9 2.500h6M9 4.500h6M9 6.500h6M9 8.500h6M2 10.500h13M2 12.500h13M2 14.500h13" stroke="#333" stroke-width="1" stroke-dasharray="1.500 0.500"/><path d="M9.500 5 L5 1 V3 H0.500 V7 H5 V9 Z" fill="#6db8ee" stroke="#1f5fa8" stroke-width="0.900"/></svg>
<i class="esep" style="left:509px"></i><svg style="left:518px;top:5px" width="14" height="16" viewBox="0 0 14 16"><circle cx="7" cy="8" r="6" fill="#f07474" stroke="#d04a4a" stroke-width="0.800"/></svg>
<svg style="left:543px;top:5px" width="14" height="16" viewBox="0 0 14 16"><rect x="1.500" y="2.500" width="11" height="11" fill="#c4c4c4" stroke="#8a8a8a"/></svg>
<i class="esep" style="left:565px"></i><svg style="left:573px;top:5px" width="17" height="16" viewBox="0 0 17 16"><path d="M9 4.500h6M9 6.500h6M9 8.500h6M1 10.500h14M1 12.500h14M1 14.500h14" stroke="#444" stroke-width="1" stroke-dasharray="1.500 0.500"/><path d="M1.500 8 L4 1.500 L6 8 L8.500 1.500" fill="none" stroke="#3aa01c" stroke-width="2"/></svg>
<svg style="left:598px;top:5px" width="17" height="16" viewBox="0 0 17 16"><path d="M11 4.500h4M11 6.500h4M8 8.500h7M1 10.500h14M1 12.500h14M1 14.500h14" stroke="#222" stroke-width="1.200" stroke-dasharray="1.500 0.500"/></svg>
<svg style="left:623px;top:5px" width="14" height="16" viewBox="0 0 14 16"><path d="M1.500 3.500 V13 Q7 16.500 12.500 13 V3.500 Z" fill="#a9a3c9" stroke="#76709a" stroke-width="0.900"/><ellipse cx="7" cy="3.500" rx="5.500" ry="2.300" fill="#cfcbe6" stroke="#76709a" stroke-width="0.900"/></svg>
</div>
<div class="code">
<div class="gutter"></div><div class="foldline"></div><div class="margin"></div>
<i class="ig" style="left:118px;top:-18px;height:651px"></i><i class="ig" style="left:174px;top:-18px;height:651px"></i><i class="ig" style="left:230px;top:-18px;height:651px"></i><i class="ig" style="left:286px;top:44px;height:589px"></i><i class="ig" style="left:342px;top:261px;height:372px"></i><i class="ig" style="left:398px;top:385px;height:217px"></i><i class="ig" style="left:454px;top:447px;height:124px"></i><i class="ig" style="left:510px;top:509px;height:31px"></i>
<div class="ln" style="top:-18px"><span class="num">1190</span><span class="c" style="left:286.4px"><span class="b">?&gt;</span></span></div>
<div class="ln" style="top:13px"><span class="num">1191</span><svg class="fold" width="17" height="17"><use href="#i-fold"/></svg><span class="c" style="left:286.4px"><span class="tag">&lt;li&gt;</span></span></div>
<div class="ln" style="top:44px"><span class="num">1192</span></div>
<div class="ln" style="top:75px"><span class="num">1193</span><span class="c" style="left:342.4px"><span class="b">&lt;?php</span></span></div>
<div class="ln" style="top:106px"><span class="num">1194</span><span class="c" style="left:342.4px"><span class="v">$tax_count</span> = -<span class="n">1</span><span class="b">;</span></span></div>
<div class="ln" style="top:137px"><i class="hib" style="left:356.4px;width:238px"></i><span class="num">1195</span><span class="c" style="left:342.4px"><span class="v">$</span><span class="v hi">tax_count_strting</span> = <span class="s">""</span><span class="b">;</span></span></div>
<div class="ln" style="top:168px"><span class="num">1196</span><span class="c" style="left:342.4px"><span class="v">$show_option</span> = <span class="k">true</span><span class="b">;</span></span></div>
<div class="ln" style="top:199px"><i class="wav" style="left:342.4px"></i><svg class="warn" width="13" height="13"><use href="#i-warn"/></svg><span class="c" style="left:342.4px"><span class="k">if</span> (<span class="v">$widget_options</span>[<span class="s">'taxonomies_options_show_count'</span>] == <span class="s">'true'</span>)</span></div>
<div class="ln" style="top:230px"><span class="num">1198</span><svg class="fold" width="17" height="17"><use href="#i-fold"/></svg><span class="c" style="left:342.4px"><span class="br">{</span></span></div>
<div class="ln" style="top:261px"><span class="num">1199</span><span class="c" style="left:398.4px"><span class="v">$tax_count</span> = <span class="k">self</span>::<span class="i">get_tax_count</span>(<span class="v">$term</span>, <span class="v">$tax_name</span>, <span class="v">$widget_options</span>)<span class="b">;</span></span></div>
<div class="ln cur" style="top:292px"><i class="hib" style="left:412.4px;width:238px"></i><span class="num">1200</span><span class="c" style="left:398.4px"><span class="v">$</span><span class="v hi">tax_count_strting</span> = <span class="s">' ('</span> . <span class="v">$tax_count</span> . <span class="s">')'</span><span class="b">;</span></span></div>
<div class="ln" style="top:323px"><i class="wav" style="left:398.4px"></i><svg class="warn" width="13" height="13"><use href="#i-warn"/></svg><span class="c" style="left:398.4px"><span class="k">if</span> (<span class="v">$widget_options</span>[<span class="s">'taxonomies_options_post_recount_dynamic'</span>] == <span class="s">'true'</span>)</span></div>
<div class="ln" style="top:354px"><span class="num">1202</span><svg class="fold" width="17" height="17"><use href="#i-fold"/></svg><span class="c" style="left:398.4px"><span class="br">{</span></span></div>
<div class="ln" style="top:385px"><span class="num">1203</span><span class="c" style="left:454.4px"><span class="k">if</span> (<span class="v">$widget_options</span>[<span class="s">'taxonomies_options_hide_terms_0'</span>] == <span class="s">'true'</span>)</span></div>
<div class="ln" style="top:416px"><span class="num">1204</span><svg class="fold" width="17" height="17"><use href="#i-fold"/></svg><span class="c" style="left:454.4px"><span class="br">{</span></span></div>
<div class="ln" style="top:447px"><span class="num">1205</span><span class="c" style="left:510.4px"><span class="k">if</span> (!<span class="v">$tax_count</span>)</span></div>
<div class="ln" style="top:478px"><span class="num">1206</span><svg class="fold" width="17" height="17"><use href="#i-fold"/></svg><span class="c" style="left:510.4px"><span class="br">{</span></span></div>
<div class="ln" style="top:509px"><span class="num">1207</span><span class="c" style="left:566.4px"><span class="v">$show_option</span> = <span class="k">false</span><span class="b">;</span></span></div>
<div class="ln" style="top:540px"><span class="num">1208</span><i class="fend"></i><span class="c" style="left:510.4px"><span class="br">}</span></span></div>
<div class="ln" style="top:571px"><span class="num">1209</span><i class="fend"></i><span class="c" style="left:454.4px"><span class="br">}</span></span></div>
<div class="ln" style="top:602px"><span class="num">1210</span></div>
<svg class="abs" style="left:84px;top:296px" width="30" height="20" viewBox="0 0 30 20"><path d="M24 10.100 L9 11" stroke="#d8080c" stroke-width="1.900" fill="none"/><path d="M1.300 11.200 L10.300 5.400 L10.900 15.700 Z" fill="#d8080c"/></svg>
<svg class="abs" style="left:720px;top:296px" width="290" height="24" viewBox="0 0 290 24"><path d="M4 18.800 Q140 15.500 281.500 11" stroke="#d11a1a" stroke-width="2.200" fill="none"/></svg>
</div>
<div class="bottom"><span>PluginUs.NET</span></div>
</body></html>
